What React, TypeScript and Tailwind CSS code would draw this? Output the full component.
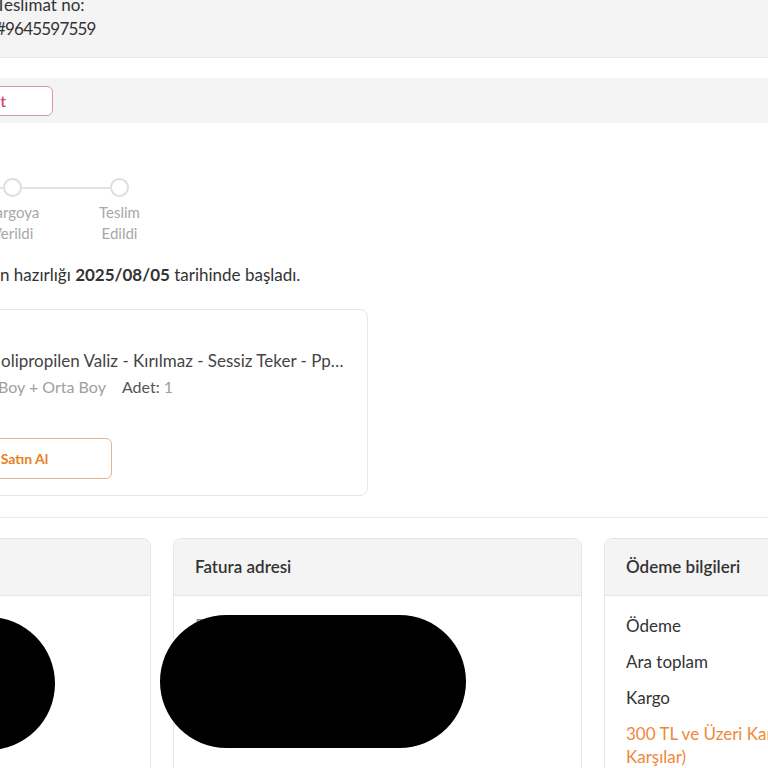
import React from 'react'

function Step({ label, sub, last }: { label: string; sub: string; last?: boolean }) {
    return (
        <div className="w-[107px] flex flex-col items-center">
            <div className="w-full flex items-center">
                <div className="flex-1 h-[2px] bg-[#e2e2e2]" />
                <div className="w-[19px] h-[19px] rounded-full border-2 border-[#dedede] bg-white" />
                <div className={last ? 'flex-1 h-[2px]' : 'flex-1 h-[2px] bg-[#e2e2e2]'} />
            </div>
            <div className="mt-[5px] text-[15px] leading-[21px] text-[#a8a8a8] text-center">
                <div>{label}</div>
                <div>{sub}</div>
            </div>
        </div>
    )
}

function InfoCard({ title, children }: { title: string; children?: React.ReactNode }) {
    return (
        <div className="w-[409px] shrink-0 h-[260px] rounded-lg border border-[#e6e6e6] overflow-hidden">
            <div className="h-[57px] bg-[#f4f4f4] border-b border-[#e6e6e6] flex items-center px-[21px] text-[17px] font-semibold text-[#333]">
                {title}
            </div>
            <div className="px-[21px] pt-[18px] text-[17px] leading-[23px] text-[#333] flex flex-col gap-[13px]">
                {children}
            </div>
        </div>
    )
}

export default function App() {
    return (
        <div className="w-[768px] h-[768px] overflow-hidden bg-white relative font-['Lato',sans-serif] text-[#333]">
            <div className="h-[58px] bg-[#f4f4f4] border-b border-[#e8e8e8] flex flex-col justify-end pb-[16px] text-[17px] leading-[24px] text-[#333]">
                <div className="-ml-[4px]">
                    <div>Teslimat no:</div>
                    <div className="tracking-[-0.8px]">#9645597559</div>
                </div>
            </div>

            <div className="h-[20px]" />

            <div className="h-[45px] bg-[#f4f4f4] flex items-center">
                <button className="-ml-[60px] w-[113px] h-[30px] rounded-md border border-[#dc93ae] bg-white flex items-center justify-end pr-[46px] text-[16px] font-semibold text-[#d83f78]">
                    t
                </button>
            </div>

            <div className="pt-[55px] flex -ml-[41px]">
                <Step label="Kargoya" sub="Verildi" />
                <Step label="Teslim" sub="Edildi" last />
            </div>

            <div className="mt-[19px] text-[17px] leading-[24px] text-[#333]">
                n hazırlığı <span className="font-bold">2025/08/05</span> tarihinde başladı.
            </div>

            <div className="mt-[22px] -ml-[40px] w-[408px] h-[187px] rounded-lg border border-[#e6e6e6] pl-[40px] pt-[39px]">
                <div className="text-[17px] leading-[24px] text-[#444] whitespace-nowrap">
                    olipropilen Valiz - Kırılmaz - Sessiz Teker - Pp…
                </div>
                <div className="mt-[2px] -ml-[3px] flex gap-[16px] text-[16px] leading-[24px] whitespace-nowrap">
                    <span className="text-[#a0a0a0]">Boy + Orta Boy</span>
                    <span className="text-[#555]">
                        Adet: <span className="text-[#a0a0a0]">1</span>
                    </span>
                </div>
                <button className="mt-[39px] -ml-[64px] w-[175px] h-[41px] rounded-md border border-[#e2b78d] bg-white text-[14px] font-bold text-[#e8801f]">
                    Satın Al
                </button>
            </div>

            <div className="mt-[21px] border-t border-[#ebebeb]" />

            <div className="mt-[20px] -ml-[258px] flex gap-[22px]">
                <InfoCard title="Teslimat adresi" />
                <InfoCard title="Fatura adresi">
                    <div className="text-[#888]">D</div>
                </InfoCard>
                <InfoCard title="Ödeme bilgileri">
                    <div>Ödeme</div>
                    <div>Ara toplam</div>
                    <div>Kargo</div>
                    <div className="w-[290px] text-[#f0883a]">
                        300 TL ve Üzeri Kargo Bedava (Satıcı Karşılar)
                    </div>
                </InfoCard>
            </div>

            <div className="absolute left-[-85px] top-[617px] w-[140px] h-[133px] rounded-full bg-black" />
            <div className="absolute left-[160px] top-[615px] w-[306px] h-[133px] rounded-full bg-black" />
        </div>
    )
}
